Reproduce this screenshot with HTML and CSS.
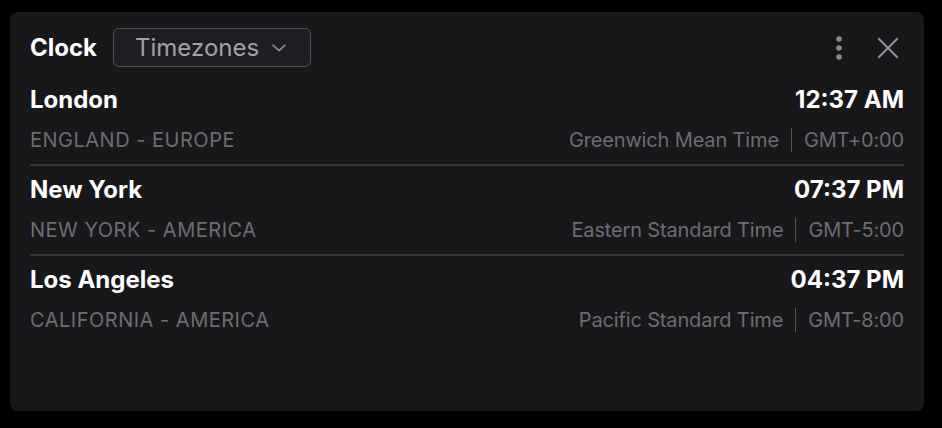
FILE: index.html
```html
<!DOCTYPE html>
<html lang="en">
<head>
<meta charset="utf-8">
<title>Clock</title>
<link rel="stylesheet" href="styles.css">
</head>
<body>
<div class="card">
  <div class="header">
    <div class="title">Clock</div>
    <button class="select">Timezones
      <svg class="chev" width="14" height="8" viewBox="0 0 14 8"><path d="M1 1.2 L7 6.6 L13 1.2" fill="none" stroke="#8e8e94" stroke-width="1.6" stroke-linecap="round" stroke-linejoin="round"/></svg>
    </button>
    <div class="spacer"></div>
    <div class="actions">
      <svg class="kebab" width="8" height="26" viewBox="0 0 8 26"><circle cx="4" cy="4" r="2.8" fill="#8a8a90"/><circle cx="4" cy="13" r="2.8" fill="#8a8a90"/><circle cx="4" cy="22" r="2.8" fill="#8a8a90"/></svg>
      <svg class="close" width="22" height="22" viewBox="0 0 22 22"><path d="M2 2 L20 20 M20 2 L2 20" fill="none" stroke="#8a8a90" stroke-width="2.4" stroke-linecap="round"/></svg>
    </div>
  </div>
  <div class="list">
    <div class="row">
      <div class="line"><span class="city">London</span><span class="time">12:37 AM</span></div>
      <div class="line"><span class="region">ENGLAND - EUROPE</span><span class="zone">Greenwich Mean Time<span class="offset">GMT+0:00</span></span></div>
    </div>
    <div class="row">
      <div class="line"><span class="city">New York</span><span class="time">07:37 PM</span></div>
      <div class="line"><span class="region">NEW YORK - AMERICA</span><span class="zone">Eastern Standard Time<span class="offset">GMT-5:00</span></span></div>
    </div>
    <div class="row last">
      <div class="line"><span class="city">Los Angeles</span><span class="time">04:37 PM</span></div>
      <div class="line"><span class="region">CALIFORNIA - AMERICA</span><span class="zone">Pacific Standard Time<span class="offset">GMT-8:00</span></span></div>
    </div>
  </div>
</div>
</body>
</html>
```
FILE: styles.css
```css
* { box-sizing: border-box; }
html, body { margin: 0; padding: 0; background: #000; }
body {
  font-family: Inter, "Noto Sans", sans-serif;
  width: 942px;
  height: 428px;
  padding: 12px 18px 17px 10px;
}
.card {
  background: #18181b;
  border-radius: 8px;
  height: 399px;
  padding: 16px 20px 0 20px;
}
.header {
  display: flex;
  align-items: center;
  height: 39px;
  margin-bottom: 9px;
}
.title {
  color: #fff;
  font-size: 24px;
  font-weight: 700;
  margin-right: 16px;
}
.select {
  display: flex;
  align-items: center;
  gap: 13px;
  height: 39px;
  width: 198px;
  padding: 0 0 0 21px;
  background: #1e1e22;
  border: 1.5px solid #4e4e55;
  border-radius: 6px;
  color: #a1a1a8;
  font-family: Inter, sans-serif;
  font-size: 24px;
  font-weight: 400;
}
.chev { margin-top: 1px; }
.spacer { flex: 1; }
.actions {
  display: flex;
  align-items: center;
  gap: 34px;
  margin-right: 5px;
}
.list { display: flex; flex-direction: column; }
.row {
  display: flex;
  flex-direction: column;
  gap: 12px;
  padding: 10px 0 10px;
  border-bottom: 2px solid #35353a;
}
.row.last { border-bottom: none; }
.line {
  display: flex;
  justify-content: space-between;
  align-items: center;
  height: 28px;
}
.city, .time {
  color: #fff;
  font-size: 24px;
  font-weight: 700;
  line-height: 28px;
}
.region {
  color: #6c6c73;
  font-size: 20px;
  letter-spacing: 0.5px;
  line-height: 28px;
}
.zone {
  color: #6c6c73;
  font-size: 20px;
  letter-spacing: -0.15px;
  line-height: 28px;
  display: flex;
  align-items: center;
}
.offset {
  margin-left: 12px;
  padding-left: 12px;
  border-left: 1px solid #55555c;
  line-height: 24px;
}
```
